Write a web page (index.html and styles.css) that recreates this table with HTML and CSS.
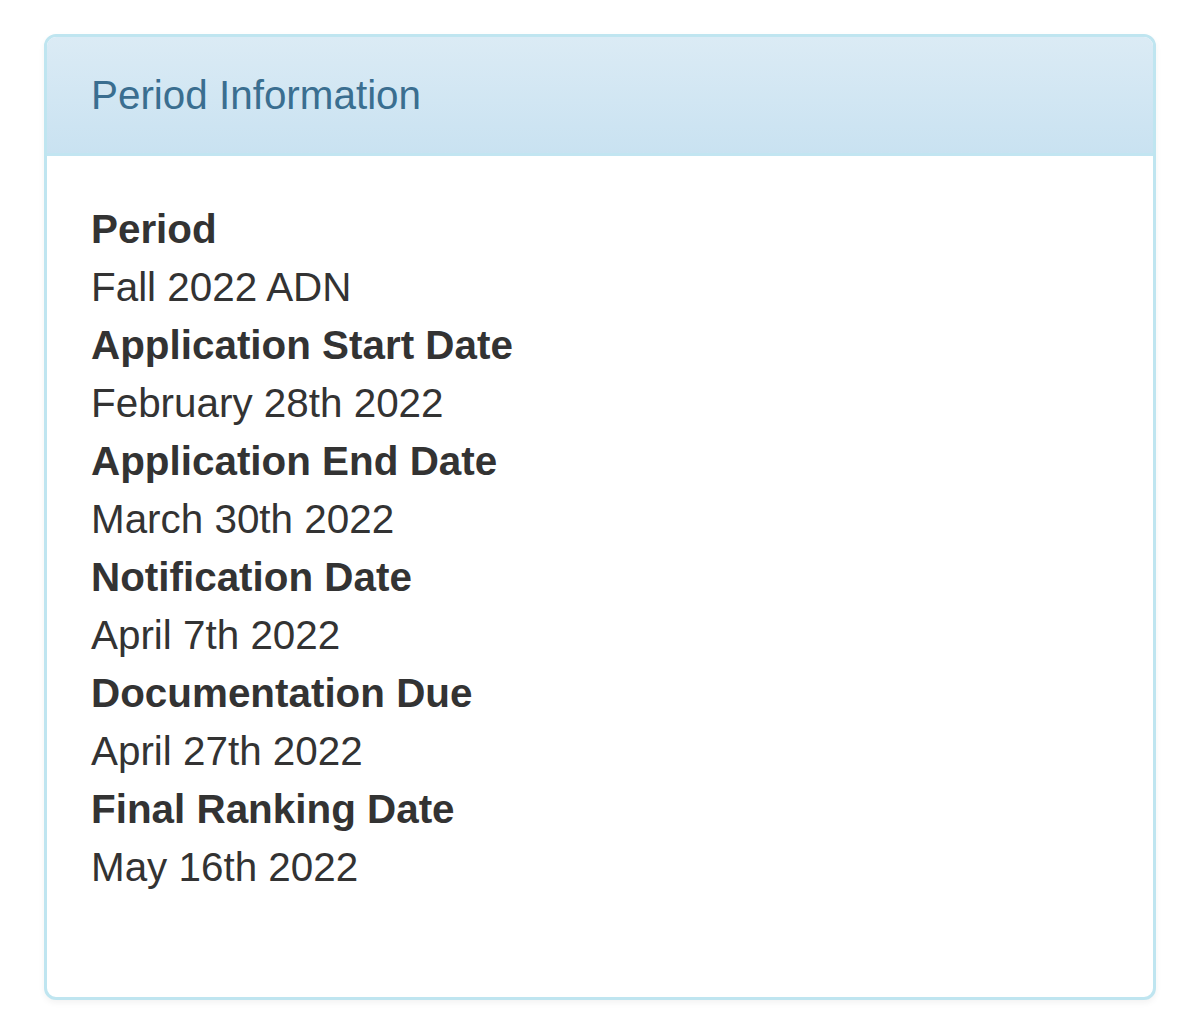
FILE: index.html
```html
<!DOCTYPE html>
<html>
<head>
<meta charset="utf-8">
<link rel="stylesheet" href="styles.css">
</head>
<body>
<div class="page">
  <div class="panel">
    <div class="panel-heading">
      <h3 class="panel-title">Period Information</h3>
    </div>
    <div class="panel-body">
      <dl class="info">
        <dt>Period</dt>
        <dd>Fall 2022 ADN</dd>
        <dt>Application Start Date</dt>
        <dd>February 28th 2022</dd>
        <dt>Application End Date</dt>
        <dd>March 30th 2022</dd>
        <dt>Notification Date</dt>
        <dd>April 7th 2022</dd>
        <dt>Documentation Due</dt>
        <dd>April 27th 2022</dd>
        <dt>Final Ranking Date</dt>
        <dd>May 16th 2022</dd>
      </dl>
    </div>
  </div>
</div>
</body>
</html>
```

FILE: styles.css
```css
html, body {
  margin: 0;
  padding: 0;
  background: #ffffff;
}

body {
  font-family: "Liberation Sans", Arial, Helvetica, sans-serif;
  color: #333333;
}

.page {
  padding: 34px 44px;
}

.panel {
  border: 3px solid #bfe5f0;
  border-radius: 12px;
  background: #ffffff;
  box-shadow: 0 3px 6px rgba(0, 0, 0, 0.05);
  overflow: hidden;
}

.panel-heading {
  background: linear-gradient(to bottom, #dbebf5 0%, #c9e2f1 100%);
  border-bottom: 3px solid #c2e5f1;
  padding: 29px 44px;
}

.panel-title {
  margin: 0;
  font-size: 40.4px;
  font-weight: normal;
  line-height: 58px;
  color: #3a6e90;
}

.panel-body {
  padding: 44px 44px 43px;
}

.info {
  margin: 0 0 58px;
  font-size: 40.4px;
  line-height: 58px;
}

.info dt {
  font-weight: bold;
  margin: 0;
}

.info dd {
  margin: 0;
}
```
